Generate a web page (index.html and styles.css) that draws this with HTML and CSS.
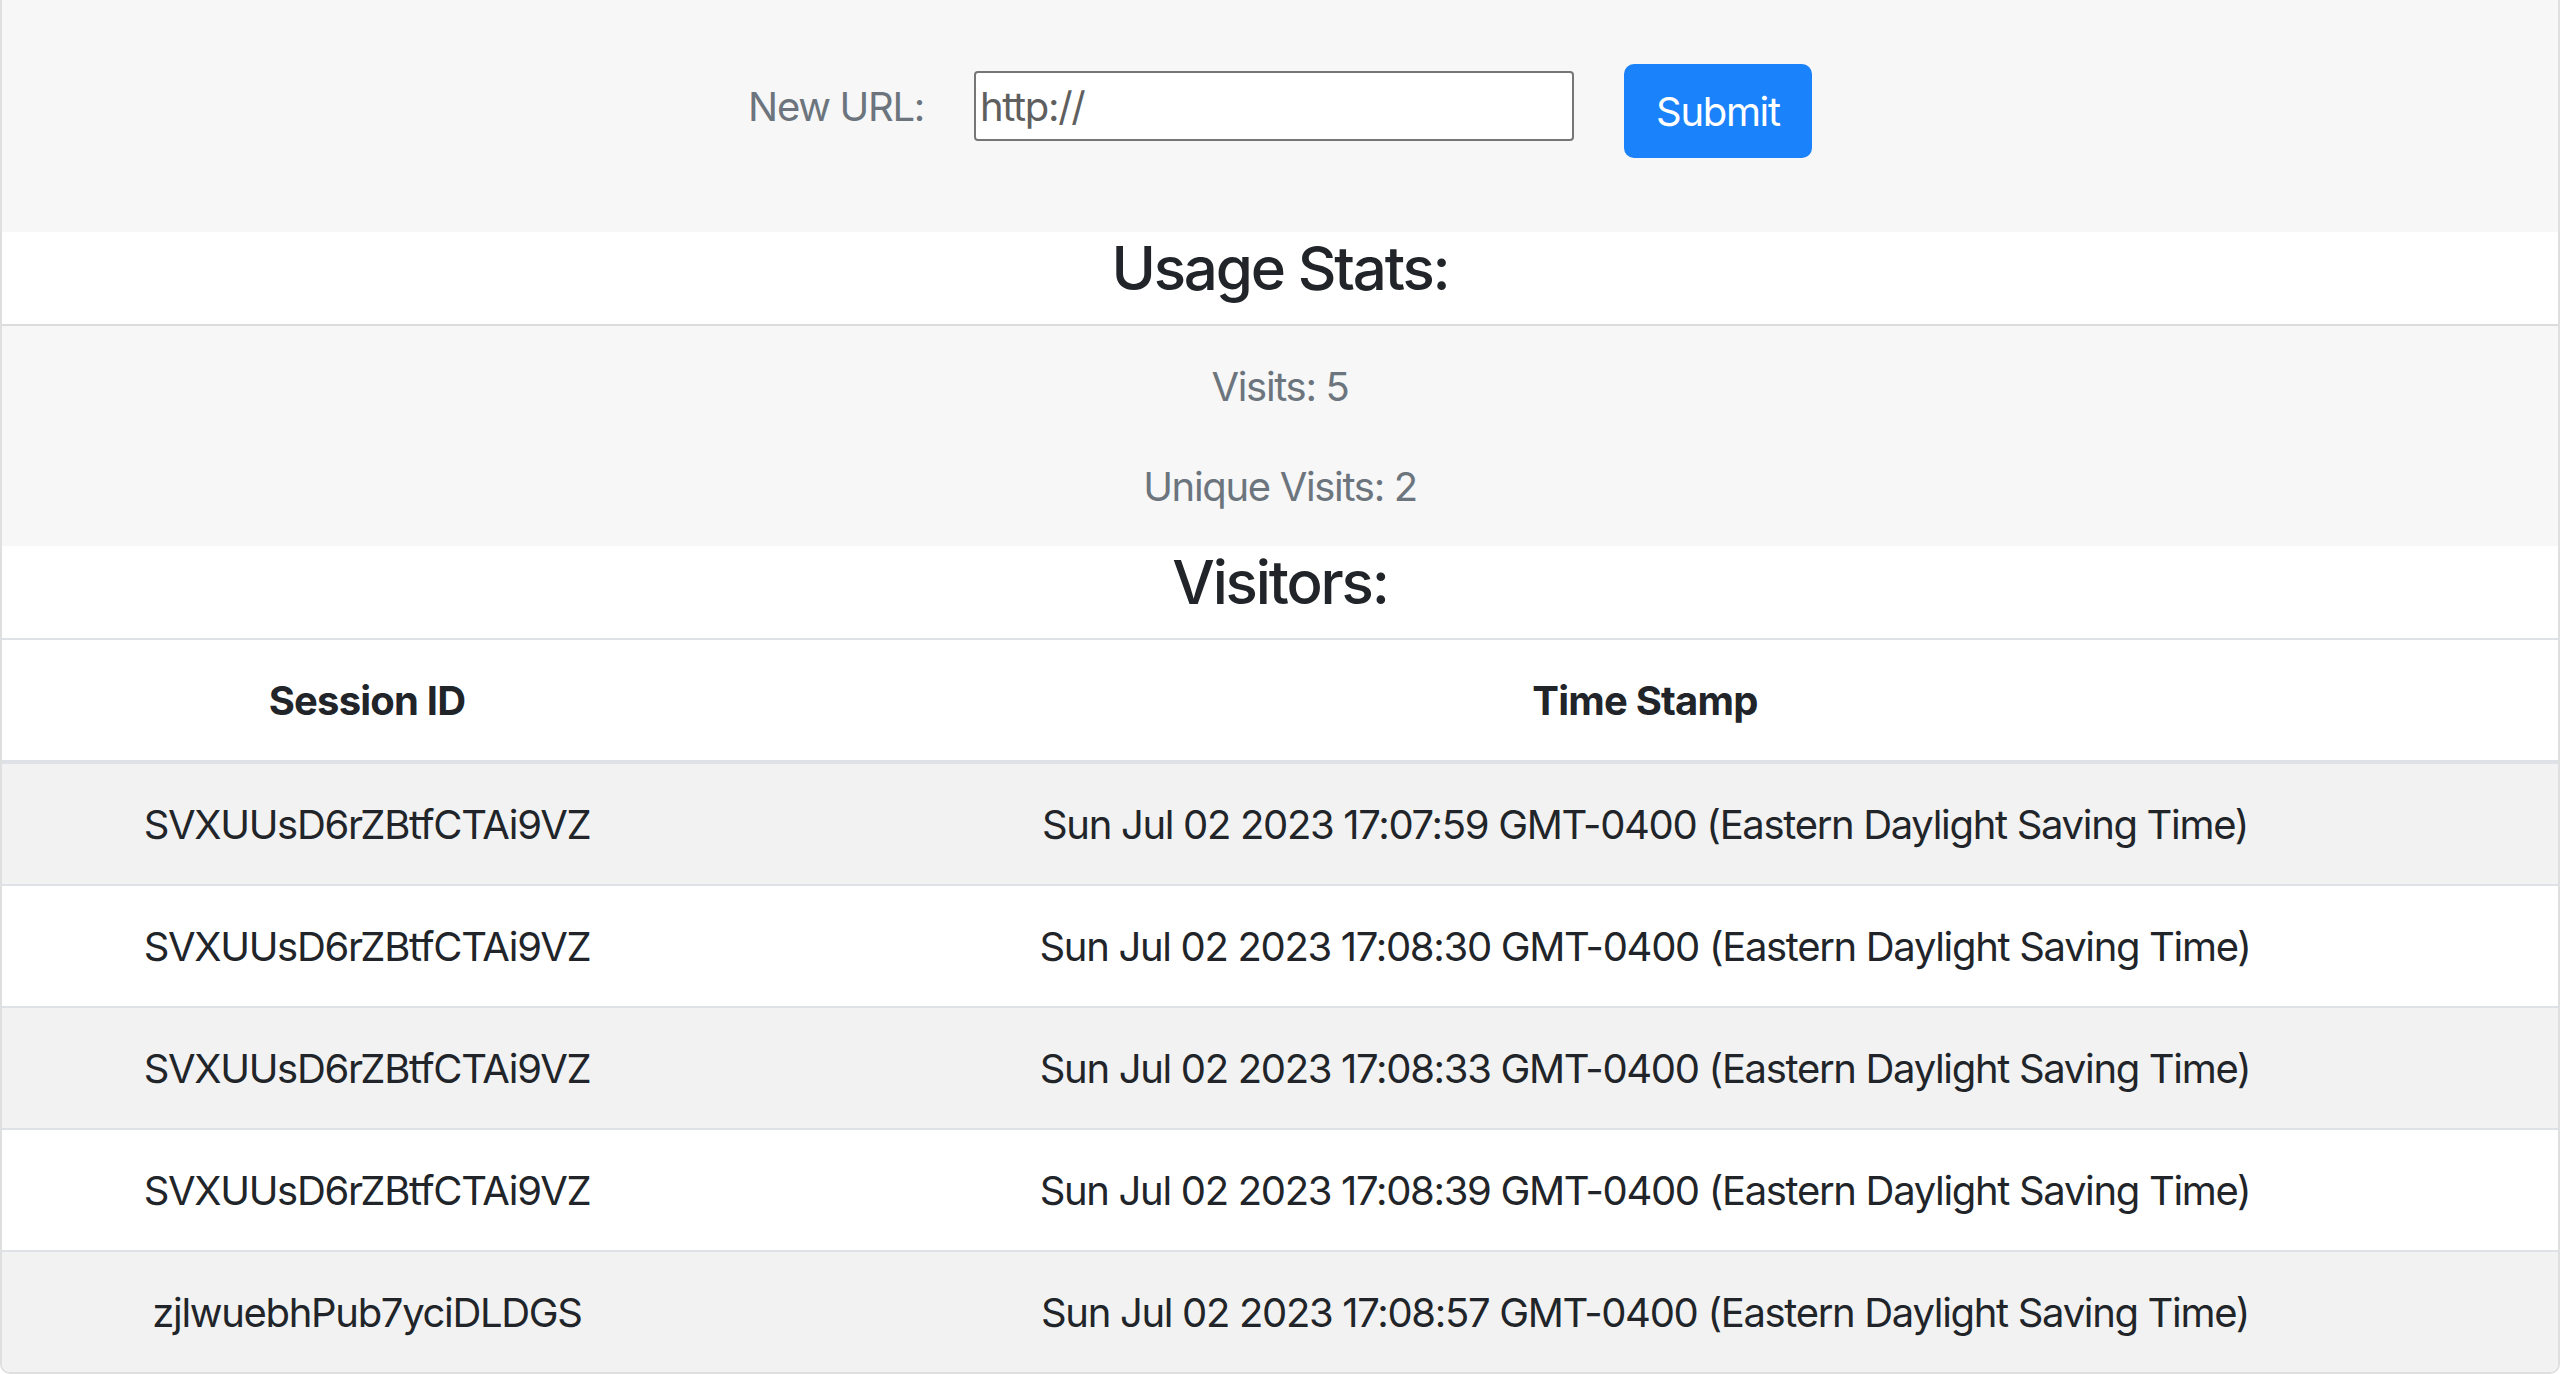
FILE: index.html
```html
<!DOCTYPE html>
<html lang="en">
<head>
<meta charset="utf-8">
<title>URL Stats</title>
<link rel="stylesheet" href="styles.css">
</head>
<body>
<div class="card">
  <section class="form-section">
    <form class="url-form">
      <label class="url-label" for="url">New URL:</label>
      <input class="url-input" id="url" type="text" value="http://">
      <button class="btn-submit" type="button">Submit</button>
    </form>
  </section>
  <h4 class="section-title title-usage">Usage Stats:</h4>
  <section class="stats-section">
    <p class="stat">Visits: 5</p>
    <p class="stat">Unique Visits: 2</p>
  </section>
  <h4 class="section-title title-visitors">Visitors:</h4>
  <table class="visitors">
    <colgroup><col class="col-id"><col class="col-ts"></colgroup>
    <thead>
      <tr><th>Session ID</th><th>Time Stamp</th></tr>
    </thead>
    <tbody>
      <tr><td>SVXUUsD6rZBtfCTAi9VZ</td><td>Sun Jul 02 2023 17:07:59 GMT-0400 (Eastern Daylight Saving Time)</td></tr>
      <tr><td>SVXUUsD6rZBtfCTAi9VZ</td><td>Sun Jul 02 2023 17:08:30 GMT-0400 (Eastern Daylight Saving Time)</td></tr>
      <tr><td>SVXUUsD6rZBtfCTAi9VZ</td><td>Sun Jul 02 2023 17:08:33 GMT-0400 (Eastern Daylight Saving Time)</td></tr>
      <tr><td>SVXUUsD6rZBtfCTAi9VZ</td><td>Sun Jul 02 2023 17:08:39 GMT-0400 (Eastern Daylight Saving Time)</td></tr>
      <tr><td>zjlwuebhPub7yciDLDGS</td><td>Sun Jul 02 2023 17:08:57 GMT-0400 (Eastern Daylight Saving Time)</td></tr>
    </tbody>
  </table>
</div>
</body>
</html>
```

FILE: styles.css
```css
html, body {
  margin: 0;
  padding: 0;
  background: #ffffff;
}

body {
  font-family: Inter, "Liberation Sans", sans-serif;
  font-size: 40px;
  line-height: 1.5;
  letter-spacing: -0.033em;
  color: #212529;
  overflow: hidden;
}

.card {
  height: 1374px;
  box-sizing: border-box;
  border: 2px solid #dfdfdf;
  border-top: 0;
  border-radius: 0 0 10px 10px;
  overflow: hidden;
  background: #fff;
}

.form-section {
  background: #f7f7f7;
  height: 232px;
  box-sizing: border-box;
  padding-top: 64px;
}

.url-form {
  display: flex;
  justify-content: center;
  align-items: flex-start;
  margin: 0;
}

.url-label {
  color: #6c757d;
  font-size: 40px;
  line-height: 60px;
  margin-top: 13px;
  margin-right: 50px;
}

.url-input {
  width: 600px;
  height: 70px;
  box-sizing: border-box;
  margin: 7px 50px 0 0;
  padding: 0 4px;
  border: 2px solid #767676;
  border-radius: 4px;
  background: #fff;
  font-family: Inter, "Liberation Sans", sans-serif;
  font-size: 40px;
  letter-spacing: -0.033em;
  color: #5f5f5f;
}

.btn-submit {
  width: 188px;
  height: 94px;
  box-sizing: border-box;
  border: 2px solid #1a82fb;
  border-radius: 10px;
  background: #1a82fb;
  color: #fff;
  font-family: Inter, "Liberation Sans", sans-serif;
  font-size: 40px;
  letter-spacing: -0.033em;
  line-height: 60px;
  padding: 16px 0 14px;
}

.section-title {
  margin: 0;
  font-size: 60px;
  font-weight: 500;
  line-height: 72px;
  letter-spacing: -0.036em;
  text-align: center;
  padding-bottom: 20px;
}

.title-usage {
  border-bottom: 2px solid #dcdcdc;
}

.stats-section {
  background: #f7f7f7;
  height: 220px;
  box-sizing: border-box;
  padding-top: 31px;
  text-align: center;
}

.stat {
  margin: 0 0 40px;
  color: #6c757d;
  line-height: 60px;
}

.stat:last-child {
  margin-bottom: 0;
}

.visitors {
  width: 100%;
  border-collapse: collapse;
  table-layout: fixed;
}

.col-id { width: 730px; }

.visitors th,
.visitors td {
  padding: 31px 0 29px;
  line-height: 60px;
  text-align: center;
  border-top: 2px solid #dee2e6;
  white-space: nowrap;
}

.visitors th {
  font-weight: 700;
  letter-spacing: -0.02em;
  border-bottom: 4px solid #dee2e6;
}

.visitors tbody tr:nth-child(odd) {
  background: #f2f2f2;
}
```
